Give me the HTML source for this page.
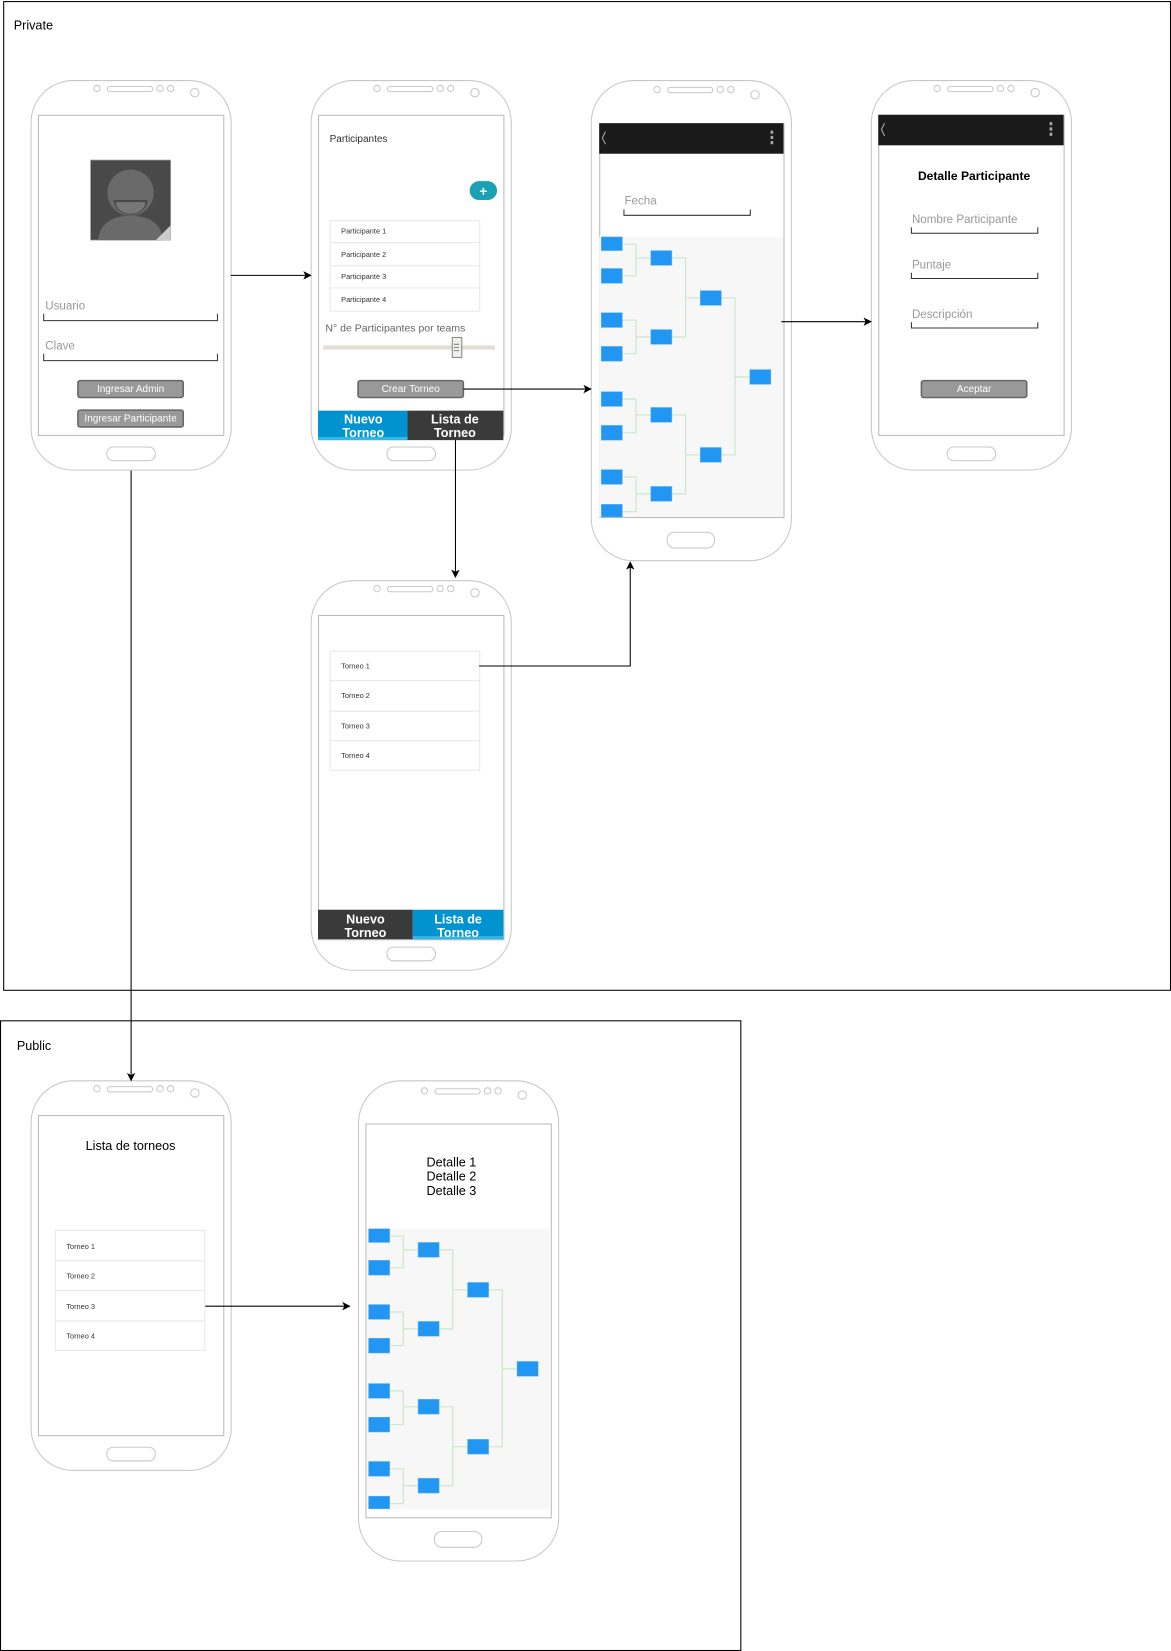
<!DOCTYPE html>
<html><head><meta charset="utf-8"><style>
html,body{margin:0;padding:0;background:#fff;}
svg{display:block;}
text{font-family:"Liberation Sans",sans-serif;}
</style></head><body>
<svg width="1171" height="1651" viewBox="0 0 1112 1568" preserveAspectRatio="none" xmlns="http://www.w3.org/2000/svg">
<defs>
<marker id="ar" markerWidth="8" markerHeight="8" refX="7" refY="4" orient="auto" markerUnits="userSpaceOnUse"><path d="M0,0 L8,4 L0,8 L2,4 z" fill="#000"/></marker>
</defs>
<!-- frames -->
<rect x="3.5" y="1.5" width="1108" height="939" fill="none" stroke="#000" stroke-width="1"/>
<text x="13" y="28" font-size="12" fill="#000">Private</text>
<rect x="0.5" y="969.5" width="703" height="598" fill="none" stroke="#000" stroke-width="1"/>
<text x="16" y="997" font-size="12" fill="#000">Public</text>

<!-- phone template drawn manually -->
<g fill="none" stroke="#c8c8c8" stroke-width="1">
 <!-- phone1 -->
 <rect x="29.5" y="76.5" width="190" height="370" rx="40"/>
 <rect x="36.5" y="109.5" width="176" height="304" stroke="#bbb"/>
 <circle cx="92" cy="84" r="3"/><rect x="102" y="82" width="43" height="5" rx="2.5"/><circle cx="152" cy="84" r="3"/><circle cx="162" cy="84" r="3"/><circle cx="185" cy="88" r="4"/>
 <rect x="101.5" y="424.5" width="46" height="13" rx="6"/>
 <!-- phone2 -->
 <rect x="295.5" y="76.5" width="190" height="370" rx="40"/>
 <rect x="302.5" y="109.5" width="176" height="304" stroke="#bbb"/>
 <circle cx="358" cy="84" r="3"/><rect x="368" y="82" width="43" height="5" rx="2.5"/><circle cx="418" cy="84" r="3"/><circle cx="428" cy="84" r="3"/><circle cx="451" cy="88" r="4"/>
 <rect x="367.5" y="424.5" width="46" height="13" rx="6"/>
 <!-- phone3 -->
 <rect x="561.5" y="76.5" width="190" height="456" rx="40"/>
 <rect x="569.5" y="117.5" width="175" height="374" stroke="#bbb"/>
 <circle cx="624" cy="85" r="3"/><rect x="634" y="83" width="43" height="5" rx="2.5"/><circle cx="684" cy="85" r="3"/><circle cx="694" cy="85" r="3"/><circle cx="717" cy="90" r="4"/>
 <rect x="633.5" y="505.5" width="45" height="15" rx="7"/>
 <!-- phone4 -->
 <rect x="827.5" y="76.5" width="190" height="370" rx="40"/>
 <rect x="834.5" y="109.5" width="176" height="304" stroke="#bbb"/>
 <circle cx="890" cy="84" r="3"/><rect x="900" y="82" width="43" height="5" rx="2.5"/><circle cx="950" cy="84" r="3"/><circle cx="960" cy="84" r="3"/><circle cx="983" cy="88" r="4"/>
 <rect x="899.5" y="424.5" width="46" height="13" rx="6"/>
 <!-- phone5 -->
 <rect x="295.5" y="551.5" width="190" height="370" rx="40"/>
 <rect x="302.5" y="584.5" width="176" height="308" stroke="#bbb"/>
 <circle cx="358" cy="559" r="3"/><rect x="368" y="557" width="43" height="5" rx="2.5"/><circle cx="418" cy="559" r="3"/><circle cx="428" cy="559" r="3"/><circle cx="451" cy="563" r="4"/>
 <rect x="367.5" y="899.5" width="46" height="13" rx="6"/>
 <!-- phone6 -->
 <rect x="29.5" y="1026.5" width="190" height="370" rx="40"/>
 <rect x="36.5" y="1059.5" width="176" height="304" stroke="#bbb"/>
 <circle cx="92" cy="1034" r="3"/><rect x="102" y="1032" width="43" height="5" rx="2.5"/><circle cx="152" cy="1034" r="3"/><circle cx="162" cy="1034" r="3"/><circle cx="185" cy="1038" r="4"/>
 <rect x="101.5" y="1374.5" width="46" height="13" rx="6"/>
 <!-- phone7 -->
 <rect x="340.5" y="1026.5" width="190" height="456" rx="40"/>
 <rect x="347.5" y="1067.5" width="176" height="374" stroke="#bbb"/>
 <circle cx="403" cy="1036" r="3"/><rect x="413" y="1034" width="43" height="5" rx="2.5"/><circle cx="463" cy="1036" r="3"/><circle cx="473" cy="1036" r="3"/><circle cx="496" cy="1040" r="4"/>
 <rect x="412.5" y="1454.5" width="45" height="15" rx="7"/>
</g>

<!-- phone1 content -->
<rect x="86" y="152" width="76" height="76" fill="#494949" stroke="#999" stroke-width="0.7"/>
<circle cx="124" cy="183" r="22" fill="#6a6a6a"/>
<path d="M108,190 A16,14 0 0 0 140,190 Z" fill="#494949"/>
<path d="M110,192 A14,11 0 0 0 138,192 Z" fill="#777"/>
<path d="M93,228 Q96,205 124,205 Q152,205 155,228 Z" fill="#6a6a6a"/>
<path d="M162,214 L162,228 L148,228 Z" fill="#ccc"/>
<text x="43" y="294" font-size="11" fill="#999">Usuario</text>
<path d="M41.5,298 V304.5 H206.5 V298" fill="none" stroke="#333"/>
<text x="43" y="332" font-size="11" fill="#999">Clave</text>
<path d="M41.5,336 V342.5 H206.5 V336" fill="none" stroke="#333"/>
<rect x="74" y="361.5" width="100" height="16" rx="2" fill="#999" stroke="#666" stroke-width="1.5"/>
<text x="124" y="372.5" font-size="9.5" fill="#fff" text-anchor="middle">Ingresar Admin</text>
<rect x="74" y="389.5" width="100" height="16" rx="2" fill="#999" stroke="#666" stroke-width="1.5"/>
<text x="124" y="400.5" font-size="9.5" fill="#fff" text-anchor="middle">Ingresar Participante</text>

<!-- phone2 content -->
<text x="313" y="135" font-size="9.5" fill="#333">Participantes</text>
<rect x="446" y="172" width="26" height="18" rx="9" fill="#1ba1b5"/>
<text x="459" y="186" font-size="13" fill="#fff" font-weight="bold" text-anchor="middle">+</text>
<g fill="#fff" stroke="#e8e8e8">
<rect x="313.5" y="209.5" width="142" height="21"/><rect x="313.5" y="230.5" width="142" height="22"/><rect x="313.5" y="252.5" width="142" height="21"/><rect x="313.5" y="273.5" width="142" height="22"/>
</g>
<g font-size="7" fill="#333">
<text x="324" y="222">Participante 1</text><text x="324" y="244">Participante 2</text><text x="324" y="265">Participante 3</text><text x="324" y="287">Participante 4</text>
</g>
<text x="309" y="315" font-size="10" fill="#666">N° de Participantes por teams</text>
<rect x="307" y="328" width="163" height="4" fill="#e3ddd6"/>
<rect x="429.5" y="320.5" width="9" height="19" fill="#eee" stroke="#888"/>
<path d="M431,327h5M431,330h5M431,333h5" stroke="#888"/>
<rect x="340" y="361.5" width="100" height="16" rx="2" fill="#999" stroke="#666" stroke-width="1.5"/>
<text x="390" y="372.5" font-size="9.5" fill="#fff" text-anchor="middle">Crear Torneo</text>
<rect x="302" y="390" width="85" height="28" fill="#0093d0"/>
<rect x="302" y="415" width="85" height="3" fill="#33b5e5"/>
<rect x="387" y="390" width="91" height="28" fill="#3a3a3a"/>
<g font-size="12" font-weight="bold" fill="#fff" text-anchor="middle">
<text x="345" y="402">Nuevo</text><text x="345" y="415">Torneo</text>
<text x="432" y="402">Lista de</text><text x="432" y="415">Torneo</text>
</g>

<!-- phone3 content -->
<rect x="569" y="117" width="175" height="29" fill="#1a1a1a"/>
<path d="M575,125 L572,131 L575,137" fill="none" stroke="#aaa" stroke-width="1"/>
<path d="M733,124v3M733,129v3M733,134v3" stroke="#aaa" stroke-width="2.5"/>
<text x="593" y="194" font-size="11" fill="#999">Fecha</text>
<path d="M592.5,199 V204.5 H712.5 V199" fill="none" stroke="#333"/>
<g id="br">
<rect x="569" y="225" width="175" height="266" fill="#f7f7f7"/>
<g fill="none" stroke="#c6e6c6" stroke-width="1">
<path d="M591,232H604V262H591M604,245H618"/>
<path d="M591,304H604V336H591M604,320H618"/>
<path d="M591,379H604V411H591M604,394H618"/>
<path d="M591,453H604V486H591M604,469H618"/>
<path d="M638,245H651V320H638M651,283H665"/>
<path d="M638,394H651V469H638M651,432H665"/>
<path d="M685,283H698V432H685M698,358H712"/>
</g>
<g fill="#2196f3" stroke="#5fb4f7" stroke-width="0.5">
<rect x="571" y="225" width="20" height="13"/><rect x="571" y="255" width="20" height="14"/><rect x="571" y="297" width="20" height="14"/><rect x="571" y="329" width="20" height="14"/>
<rect x="571" y="372" width="20" height="14"/><rect x="571" y="404" width="20" height="14"/><rect x="571" y="446" width="20" height="14"/><rect x="571" y="479" width="20" height="12"/>
<rect x="618" y="238" width="20" height="14"/><rect x="618" y="313" width="20" height="14"/><rect x="618" y="387" width="20" height="14"/><rect x="618" y="462" width="20" height="14"/>
<rect x="665" y="276" width="20" height="14"/><rect x="665" y="425" width="20" height="14"/>
<rect x="712" y="351" width="20" height="14"/>
</g>
</g>

<!-- phone4 content -->
<rect x="834" y="109" width="176" height="29" fill="#1a1a1a"/>
<path d="M840,117 L837,123 L840,129" fill="none" stroke="#aaa" stroke-width="1"/>
<path d="M998,116v3M998,121v3M998,126v3" stroke="#aaa" stroke-width="2.5"/>
<text x="925" y="171" font-size="11.5" font-weight="bold" fill="#000" text-anchor="middle">Detalle Participante</text>
<text x="866" y="212" font-size="11" fill="#999">Nombre Participante</text>
<path d="M865.5,216 V221.5 H985.5 V216" fill="none" stroke="#333"/>
<text x="866" y="255" font-size="11" fill="#999">Puntaje</text>
<path d="M865.5,259 V264.5 H985.5 V259" fill="none" stroke="#333"/>
<text x="866" y="302" font-size="11" fill="#999">Descripción</text>
<path d="M865.5,306 V311.5 H985.5 V306" fill="none" stroke="#333"/>
<rect x="875" y="361.5" width="100" height="16" rx="2" fill="#999" stroke="#666" stroke-width="1.5"/>
<text x="925" y="372.5" font-size="9.5" fill="#fff" text-anchor="middle">Aceptar</text>

<!-- phone5 content -->
<g fill="#fff" stroke="#e8e8e8">
<rect x="313.5" y="618.5" width="142" height="28"/><rect x="313.5" y="646.5" width="142" height="29"/><rect x="313.5" y="675.5" width="142" height="28"/><rect x="313.5" y="703.5" width="142" height="28"/>
</g>
<g font-size="7" fill="#333">
<text x="324" y="635">Torneo 1</text><text x="324" y="663">Torneo 2</text><text x="324" y="692">Torneo 3</text><text x="324" y="720">Torneo 4</text>
</g>
<rect x="302" y="864" width="90" height="28" fill="#3a3a3a"/>
<rect x="392" y="864" width="86" height="28" fill="#0093d0"/>
<rect x="392" y="889" width="86" height="3" fill="#33b5e5"/>
<g font-size="12" font-weight="bold" fill="#fff" text-anchor="middle">
<text x="347" y="877">Nuevo</text><text x="347" y="890">Torneo</text>
<text x="435" y="877">Lista de</text><text x="435" y="890">Torneo</text>
</g>

<!-- phone6 content -->
<text x="124" y="1092" font-size="12" fill="#000" text-anchor="middle">Lista de torneos</text>
<g fill="#fff" stroke="#e8e8e8">
<rect x="52.5" y="1168.5" width="142" height="29"/><rect x="52.5" y="1197.5" width="142" height="28"/><rect x="52.5" y="1225.5" width="142" height="29"/><rect x="52.5" y="1254.5" width="142" height="28"/>
</g>
<g font-size="7" fill="#333">
<text x="63" y="1186">Torneo 1</text><text x="63" y="1214">Torneo 2</text><text x="63" y="1243">Torneo 3</text><text x="63" y="1271">Torneo 4</text>
</g>

<!-- phone7 content -->
<g font-size="12" fill="#000">
<text x="405" y="1108">Detalle 1</text><text x="405" y="1121">Detalle 2</text><text x="405" y="1135">Detalle 3</text>
</g>
<g transform="translate(-221,942)">
<rect x="569" y="225" width="175" height="266" fill="#f7f7f7"/>
<g fill="none" stroke="#c6e6c6" stroke-width="1">
<path d="M591,232H604V262H591M604,245H618"/>
<path d="M591,304H604V336H591M604,320H618"/>
<path d="M591,379H604V411H591M604,394H618"/>
<path d="M591,453H604V486H591M604,469H618"/>
<path d="M638,245H651V320H638M651,283H665"/>
<path d="M638,394H651V469H638M651,432H665"/>
<path d="M685,283H698V432H685M698,358H712"/>
</g>
<g fill="#2196f3" stroke="#5fb4f7" stroke-width="0.5">
<rect x="571" y="225" width="20" height="13"/><rect x="571" y="255" width="20" height="14"/><rect x="571" y="297" width="20" height="14"/><rect x="571" y="329" width="20" height="14"/>
<rect x="571" y="372" width="20" height="14"/><rect x="571" y="404" width="20" height="14"/><rect x="571" y="446" width="20" height="14"/><rect x="571" y="479" width="20" height="12"/>
<rect x="618" y="238" width="20" height="14"/><rect x="618" y="313" width="20" height="14"/><rect x="618" y="387" width="20" height="14"/><rect x="618" y="462" width="20" height="14"/>
<rect x="665" y="276" width="20" height="14"/><rect x="665" y="425" width="20" height="14"/>
<rect x="712" y="351" width="20" height="14"/>
</g>
</g>

<!-- arrows -->
<g fill="none" stroke="#000" stroke-width="1" marker-end="url(#ar)">
<path d="M219,261.5 H295"/>
<path d="M440,369.5 H561"/>
<path d="M432.5,418 V548"/>
<path d="M742,305.5 H827"/>
<path d="M455,632.5 H598.5 V534"/>
<path d="M124.5,447 V1026"/>
<path d="M195,1240.5 H332"/>
</g>
</svg>
</body></html>
